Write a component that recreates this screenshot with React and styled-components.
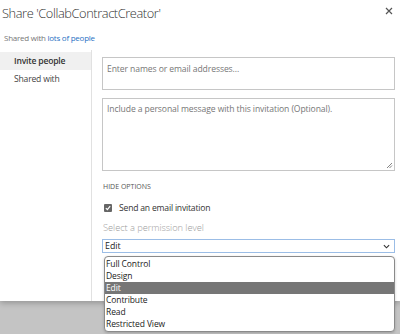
import React from "react";
import styled, { createGlobalStyle } from "styled-components";

const Global = createGlobalStyle`
  html, body { margin: 0; padding: 0; }
  body { font-family: "Open Sans", "Noto Sans", sans-serif; background: #c9c9c9; }
`;

const Page = styled.div`
  width: 400px;
  height: 334px;
  background: linear-gradient(#dadada, #c4c4c4 20px);
  position: relative;
  overflow: hidden;
`;

const Dialog = styled.div`
  position: relative;
  height: 301px;
  background: #fff;
  box-shadow: 0 2px 6px rgba(0, 0, 0, 0.25);
  display: flex;
  flex-direction: column;
`;

const Header = styled.div`
  display: flex;
  justify-content: space-between;
  align-items: flex-start;
  padding: 2px 7px 0 2px;
  height: 26px;
`;

const Title = styled.h1`
  margin: 0;
  font-size: 12.8px;
  font-weight: 300;
  color: #333;
  letter-spacing: -0.4px;
  line-height: 22px;
`;

const Close = styled.button`
  border: 0;
  background: none;
  padding: 0;
  margin-top: 5px;
  width: 8px;
  height: 8px;
  display: flex;
`;

const SharedLine = styled.div`
  font-size: 8px;
  color: #777;
  padding-left: 4px;
  height: 22px;
  line-height: 20px;
  letter-spacing: -0.25px;
`;

const LinkText = styled.span`
  color: #2a72c4;
`;

const Body = styled.div`
  flex: 1;
  display: flex;
`;

const Nav = styled.nav`
  width: 92px;
  border-right: 1px solid #e1e1e1;
  padding-top: 2px;
  box-sizing: border-box;
`;

const NavItem = styled.div`
  height: 18px;
  line-height: 18px;
  padding-left: 14px;
  font-size: 8.6px;
  letter-spacing: -0.2px;
  font-weight: ${(p) => (p.$active ? 600 : 400)};
  color: ${(p) => (p.$active ? "#333" : "#444")};
  background: ${(p) => (p.$active ? "#f0f0f0" : "transparent")};
`;

const Content = styled.div`
  flex: 1;
  padding: 7px 5px 0 10px;
  position: relative;
`;

const Field = styled.div`
  box-sizing: border-box;
  height: ${(p) => p.$h}px;
  margin-top: ${(p) => p.$mt || 0}px;
  border: 1px solid #c6c6c6;
  padding: ${(p) => p.$pad};
  font-size: 8.6px;
  letter-spacing: -0.1px;
  color: #777;
  position: relative;
`;

const Resize = styled.svg`
  position: absolute;
  right: 1px;
  bottom: 1px;
`;

const Options = styled.div`
  margin-top: 11px;
  font-size: 7px;
  color: #555;
  height: 10px;
  line-height: 10px;
  padding-left: 1px;
`;

const CheckRow = styled.div`
  margin-top: 9px;
  display: flex;
  align-items: center;
  gap: 7px;
  font-size: 8.6px;
  letter-spacing: -0.2px;
  color: #333;
  height: 14px;
`;

const Box = styled.span`
  width: 8px;
  height: 8px;
  background: #666;
  border-radius: 1px;
  display: flex;
  align-items: center;
  justify-content: center;
  margin-left: 2px;
`;

const Label = styled.div`
  margin-top: 5px;
  font-size: 9.3px;
  font-weight: 300;
  letter-spacing: -0.05px;
  color: #9c9c9c;
  height: 16px;
  line-height: 16px;
  padding-left: 1px;
`;

const Select = styled.div`
  margin-top: 3px;
  box-sizing: border-box;
  height: 14px;
  border: 1px solid #9bbde6;
  display: flex;
  align-items: center;
  justify-content: space-between;
  padding: 0 4px 0 2px;
  font-size: 8.8px;
  color: #222;
`;

const List = styled.ul`
  position: absolute;
  left: 12px;
  right: 5px;
  top: 206px;
  margin: 0;
  padding: 1px 0;
  list-style: none;
  background: #fff;
  border: 1px solid #8a8a8a;
  border-radius: 4px;
  box-shadow: 0 1px 3px rgba(0, 0, 0, 0.2);
  z-index: 2;
`;

const Option = styled.li`
  height: 12px;
  line-height: 12px;
  padding-left: 1px;
  font-size: 8.5px;
  letter-spacing: -0.1px;
  color: ${(p) => (p.$sel ? "#fff" : "#222")};
  background: ${(p) => (p.$sel ? "#767676" : "transparent")};
`;

const options = ["Full Control", "Design", "Edit", "Contribute", "Read", "Restricted View"];

export default function App() {
  return (
    <Page>
      <Global />
      <Dialog>
        <Header>
          <Title>Share 'CollabContractCreator'</Title>
          <Close aria-label="Close">
            <svg width="8" height="8" viewBox="0 0 8 8">
              <path d="M1 1L7 7M7 1L1 7" stroke="#555" strokeWidth="1.2" />
            </svg>
          </Close>
        </Header>
        <SharedLine>
          Shared with <LinkText>lots of people</LinkText>
        </SharedLine>
        <Body>
          <Nav>
            <NavItem $active>Invite people</NavItem>
            <NavItem>Shared with</NavItem>
          </Nav>
          <Content>
            <Field $h={33} $pad="5px 4px">Enter names or email addresses...</Field>
            <Field $h={73} $mt={8} $pad="4px 4px">
              Include a personal message with this invitation (Optional).
              <Resize width="7" height="7" viewBox="0 0 7 7">
                <path d="M6 1L1 6M6 3.5L3.5 6" stroke="#777" strokeWidth="0.9" />
              </Resize>
            </Field>
            <Options>HIDE OPTIONS</Options>
            <CheckRow>
              <Box>
                <svg width="6" height="6" viewBox="0 0 7 7">
                  <path d="M1 3.6L2.8 5.4L6 1.4" stroke="#fff" strokeWidth="1.4" fill="none" />
                </svg>
              </Box>
              Send an email invitation
            </CheckRow>
            <Label>Select a permission level</Label>
            <Select>
              Edit
              <svg width="7" height="5" viewBox="0 0 8 5">
                <path d="M1 1L4 4L7 1" stroke="#333" strokeWidth="1.3" fill="none" />
              </svg>
            </Select>
            <List>
              {options.map((o) => (
                <Option key={o} $sel={o === "Edit"}>
                  {o}
                </Option>
              ))}
            </List>
          </Content>
        </Body>
      </Dialog>
    </Page>
  );
}
